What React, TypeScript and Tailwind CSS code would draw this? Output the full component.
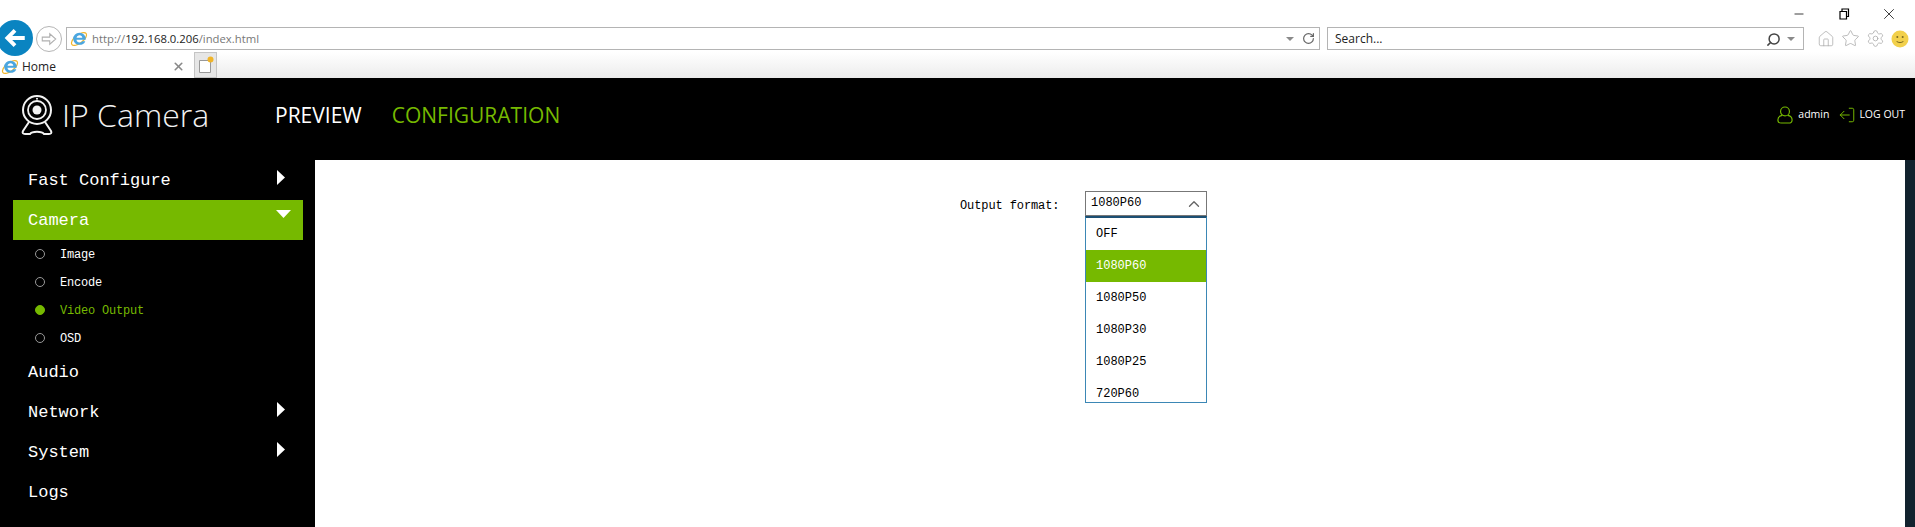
import { ChevronUp, RotateCw, Search, Home, Star, Settings, X, Minus, LogOut } from "lucide-react";

function IeIcon({ size = 18 }: { size?: number }) {
  return (
    <svg viewBox="0 0 20 20" width={size} height={size} aria-hidden>
      <ellipse cx="10" cy="10" rx="10" ry="4.600" transform="rotate(-38 10 10)" fill="none" stroke="#f0b429" strokeWidth="1.300" />
      <path
        d="M10.500 3a7 7 0 0 1 7 7.800H7.200c.2 2 1.500 3.100 3.400 3.100 1.300 0 2.300-.5 3-1.500h3.400c-1 2.800-3.400 4.100-6.500 4.100A6.800 6.800 0 0 1 3.500 9.800 6.800 6.800 0 0 1 10.500 3zM7.300 8.600h6.400c-.1-1.800-1.300-2.900-3.100-2.900S7.500 6.800 7.300 8.600z"
        fill="#4aa6e0"
        fillRule="evenodd"
      />
    </svg>
  );
}

function BackButton() {
  return (
    <div className="absolute left-[-3px] top-[20px] z-10 flex h-[36px] w-[36px] items-center justify-center rounded-full bg-[#0a84c1]">
      <svg viewBox="0 0 24 24" className="h-[26px] w-[26px]" fill="none" stroke="#fff" strokeWidth="3.600" aria-hidden>
        <path d="M21 12H5M12 5l-7 7 7 7" />
      </svg>
    </div>
  );
}

function ForwardButton() {
  return (
    <div className="flex h-[26px] w-[26px] items-center justify-center rounded-full border border-[#b5b5b5]">
      <svg viewBox="0 0 24 24" className="h-[18px] w-[18px]" fill="none" stroke="#b0b0b0" strokeWidth="1.400" aria-hidden>
        <path d="M3 9.500h10V5l8 7-8 7v-4.500H3z" />
      </svg>
    </div>
  );
}

function Caret() {
  return (
    <svg viewBox="0 0 8 4" className="h-[4px] w-[8px]" aria-hidden>
      <path d="M0 0h8L4 4z" fill="#8a8a8a" />
    </svg>
  );
}

function Smiley() {
  return (
    <svg viewBox="0 0 18 18" className="h-[18px] w-[18px]" aria-hidden>
      <circle cx="9" cy="9" r="8.500" fill="#f2d04b" />
      <circle cx="6.300" cy="7" r="1" fill="#7a6a20" />
      <circle cx="11.700" cy="7" r="1" fill="#7a6a20" />
      <path d="M5.500 11c1 2 6 2 7 0" fill="none" stroke="#7a6a20" strokeWidth="1" />
    </svg>
  );
}

function BrowserChrome() {
  return (
    <div className="relative h-[78px] bg-white font-['Open_Sans',sans-serif] text-[#222]">
      <div className="flex h-[27px] items-center justify-end">
        <Minus className="mr-[32px] h-[14px] w-[14px] text-black" strokeWidth={1.300} />
        <svg viewBox="0 0 12 12" className="mr-[30px] h-[12px] w-[12px]" fill="none" stroke="#000" strokeWidth="1.200" aria-hidden>
          <path d="M2 3.500h6.500V11H2zM4 3.500V1h6.500v7.500h-2" />
        </svg>
        <X className="mr-[17px] h-[18px] w-[18px] text-black" strokeWidth={1} />
      </div>

      <BackButton />

      <div className="flex h-[23px] items-center pl-[36px]">
        <ForwardButton />
        <div className="ml-[4px] flex h-[23px] w-[1254px] items-center border border-[#b4b4b4] pl-[3px]">
          <IeIcon size={18} />
          <span className="ml-[4px] pt-[1px] text-[11.300px] text-[#777]">
            http://<span className="text-[#222]">192.168.0.206</span>/index.html
          </span>
          <div className="ml-auto mr-[4px] flex items-center gap-[8px]">
            <Caret />
            <RotateCw className="h-[13px] w-[13px] text-[#666]" strokeWidth={2.200} />
          </div>
        </div>
        <div className="ml-[7px] flex h-[23px] w-[477px] items-center border border-[#b4b4b4] pl-[7px] pt-[1px] text-[12px]">
          Search...
          <div className="ml-auto mr-[8px] flex items-center gap-[6px]">
            <Search className="h-[15px] w-[15px] -scale-x-100 text-[#444]" strokeWidth={2.400} />
            <Caret />
          </div>
        </div>
        <div className="ml-[13px] flex items-center gap-[6px]">
          <Home className="h-[18px] w-[18px] text-[#aaa]" strokeWidth={1} />
          <Star className="h-[19px] w-[19px] text-[#aaa]" strokeWidth={1} />
          <Settings className="h-[19px] w-[19px] text-[#aaa]" strokeWidth={1} />
          <Smiley />
        </div>
      </div>

      <div className="mt-[2px] flex h-[26px] bg-gradient-to-b from-white to-[#ececec]">
        <div className="flex h-full w-[194px] items-center bg-white pl-[1px] pt-[3px]">
          <IeIcon size={18} />
          <span className="ml-[3px] text-[12px]">Home</span>
          <X className="ml-auto mr-[9px] h-[13px] w-[13px] text-[#888]" strokeWidth={3} />
        </div>
        <div className="flex h-full w-[23px] items-center justify-center border border-[#c4c4c4] bg-[#e6e6e6]">
          <svg viewBox="0 0 16 18" className="h-[18px] w-[16px]" aria-hidden>
            <path d="M1.500 4.500h11v12h-11z" fill="#fff" stroke="#999" />
            <circle cx="12.500" cy="3.500" r="3" fill="#f0b429" />
          </svg>
        </div>
      </div>
    </div>
  );
}

function CameraLogo() {
  return (
    <svg viewBox="0 0 32 40" className="h-[40px] w-[32px]" fill="none" stroke="#f2f2f2" aria-hidden>
      <circle cx="16" cy="15" r="14" strokeWidth="2" />
      <circle cx="16" cy="15" r="9" strokeWidth="1.800" />
      <circle cx="16" cy="15" r="4.500" fill="#f2f2f2" stroke="none" />
      <circle cx="16" cy="3.800" r="1" fill="#f2f2f2" stroke="none" />
      <path d="M8 27 2 36c-1 2 0 3 2 3h5c2-3 12-3 14 0h5c2 0 3-1 2-3l-6-9" strokeWidth="2" />
    </svg>
  );
}

function UserIcon() {
  return (
    <svg viewBox="0 0 18 20" className="h-[18px] w-[16px]" fill="none" stroke="#76b900" strokeWidth="1.300" aria-hidden>
      <circle cx="9" cy="6" r="5" />
      <path d="M6 10.500C3 11 1 12.800 1 15.500 1 18 2.500 19 5 19h8c2.500 0 4-1 4-3.500 0-2.700-2-4.500-5-5" />
    </svg>
  );
}

function TopBar() {
  return (
    <div className="flex h-[82px] items-center bg-black pb-[8px] font-['Open_Sans',sans-serif]">
      <div className="ml-[21px]">
        <CameraLogo />
      </div>
      <div className="ml-[9px] w-[213px] text-[32px] font-light leading-none text-[#f2f2f2]">IP Camera</div>
      <div className="text-[21px] leading-none text-white">PREVIEW</div>
      <div className="ml-[30px] text-[21px] leading-none text-[#76b900]">CONFIGURATION</div>
      <div className="ml-auto mr-[10px] flex items-center text-[10.500px] text-white">
        <UserIcon />
        <span className="ml-[5px]">admin</span>
        <LogOut className="ml-[9px] h-[18px] w-[18px] -scale-x-100 text-[#76b900]" strokeWidth={1.300} />
        <span className="ml-[3px]">LOG OUT</span>
      </div>
    </div>
  );
}

function RightArrow() {
  return (
    <svg viewBox="0 0 8 15" className="ml-auto mr-[18px] h-[15px] w-[8px] -translate-y-[3px]" aria-hidden>
      <path d="M0 0l8 7.500L0 15z" fill="#fff" />
    </svg>
  );
}

function DownArrow() {
  return (
    <svg viewBox="0 0 15 8" className="ml-auto mr-[12px] h-[8px] w-[15px] -translate-y-[6px]" aria-hidden>
      <path d="M0 0h15L7.500 8z" fill="#fff" />
    </svg>
  );
}

function MenuRow({ label, arrow, active }: { label: string; arrow?: "right" | "down"; active?: boolean }) {
  return (
    <div className={`ml-[13px] mr-[12px] flex h-[40px] items-center pl-[15px] text-[17px] text-white ${active ? "bg-[#76b900]" : ""}`}>
      <span className="pt-[2px]">{label}</span>
      {arrow === "right" && <RightArrow />}
      {arrow === "down" && <DownArrow />}
    </div>
  );
}

function SubRow({ label, active }: { label: string; active?: boolean }) {
  return (
    <div className={`flex h-[28px] items-center pl-[35px] text-[12px] tracking-[-0.2px] ${active ? "text-[#76b900]" : "text-white"}`}>
      <span className={`h-[10px] w-[10px] rounded-full border ${active ? "border-[#76b900] bg-[#76b900]" : "border-[#999]"}`} />
      <span className="ml-[15px] pt-[1px]">{label}</span>
    </div>
  );
}

function Sidebar() {
  return (
    <aside className="h-full w-[315px] shrink-0 bg-black font-['Liberation_Mono',monospace]">
      <MenuRow label="Fast Configure" arrow="right" />
      <MenuRow label="Camera" arrow="down" active />
      <SubRow label="Image" />
      <SubRow label="Encode" />
      <SubRow label="Video Output" active />
      <SubRow label="OSD" />
      <MenuRow label="Audio" />
      <MenuRow label="Network" arrow="right" />
      <MenuRow label="System" arrow="right" />
      <MenuRow label="Logs" />
    </aside>
  );
}

const OPTIONS = ["OFF", "1080P60", "1080P50", "1080P30", "1080P25", "720P60"];

function OutputSelect() {
  return (
    <div className="relative">
      <div className="flex h-[25px] w-[122px] items-center border border-[#777] pb-[1px] pl-[5px] text-black">
        1080P60
        <ChevronUp className="ml-auto mr-[3px] mt-[2px] h-[18px] w-[18px] text-[#666]" strokeWidth={1.800} />
      </div>
      <div className="absolute left-0 top-[25px] z-10 h-[187px] w-[122px] overflow-hidden border border-t-[2px] border-[#3b87b5] border-t-[#1c4f73] bg-white">
        {OPTIONS.map((opt) => (
          <div
            key={opt}
            className={`flex h-[32px] items-center pl-[10px] ${opt === "1080P60" ? "bg-[#76b900] text-white" : "text-black"}`}
          >
            {opt}
          </div>
        ))}
      </div>
    </div>
  );
}

export default function App() {
  return (
    <div className="h-[527px] w-full overflow-hidden bg-white">
      <BrowserChrome />
      <TopBar />
      <div className="flex h-[367px]">
        <Sidebar />
        <main className="flex flex-1 bg-white pl-[645px] pt-[31px] font-['Liberation_Mono',monospace] text-[12px]">
          <div className="w-[125px] pt-[6px] tracking-[-0.1px] text-black">Output format:</div>
          <OutputSelect />
        </main>
        <div className="w-[10px] bg-[#12222e]" />
      </div>
    </div>
  );
}
